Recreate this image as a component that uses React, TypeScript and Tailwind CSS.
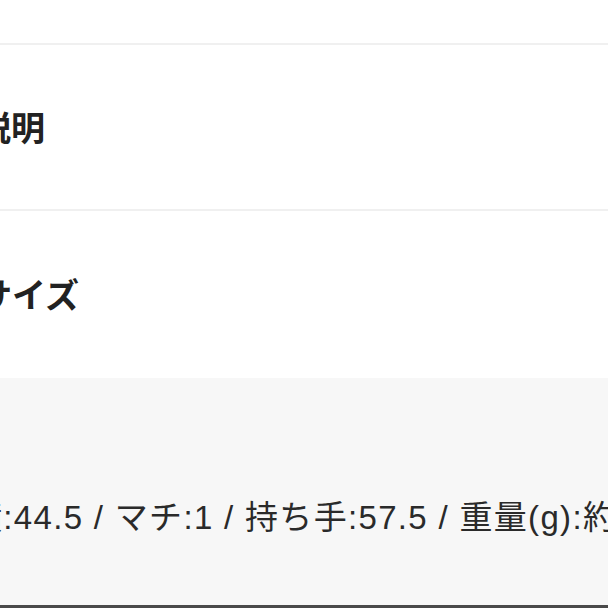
import React from "react";

const jp = '"Liberation Sans", "Noto Sans CJK JP", sans-serif';

export default function App() {
  return (
    <div className="w-[608px] h-[608px] overflow-hidden bg-white flex flex-col" style={{ fontFamily: jp }}>
      <div className="h-[43px] bg-white shrink-0" />
      <div className="h-[2px] bg-[#f0f0f0] shrink-0" />
      <div className="h-[164px] shrink-0 flex items-center pt-[4px]">
        <h2 className="ml-[-23px] text-[34px] leading-none font-bold text-[#222] whitespace-nowrap">説明</h2>
      </div>
      <div className="h-[2px] bg-[#f0f0f0] shrink-0" />
      <div className="h-[167px] shrink-0 flex items-center pt-[2px]">
        <h2 className="ml-[-22px] text-[34px] leading-none font-bold text-[#222] whitespace-nowrap">サイズ</h2>
      </div>
      <div className="flex-1 bg-[#f7f7f7] flex flex-col justify-end overflow-hidden">
        <p className="ml-[-31px] mb-[71px] text-[33px] leading-none tracking-[0.04em] text-[#2a2a2a] whitespace-nowrap">
          横:44.5 / マチ:1 / 持ち手:57.5 / 重量(g):約
        </p>
      </div>
      <div className="h-[3px] bg-[#4a4a4a] shrink-0" />
    </div>
  );
}
